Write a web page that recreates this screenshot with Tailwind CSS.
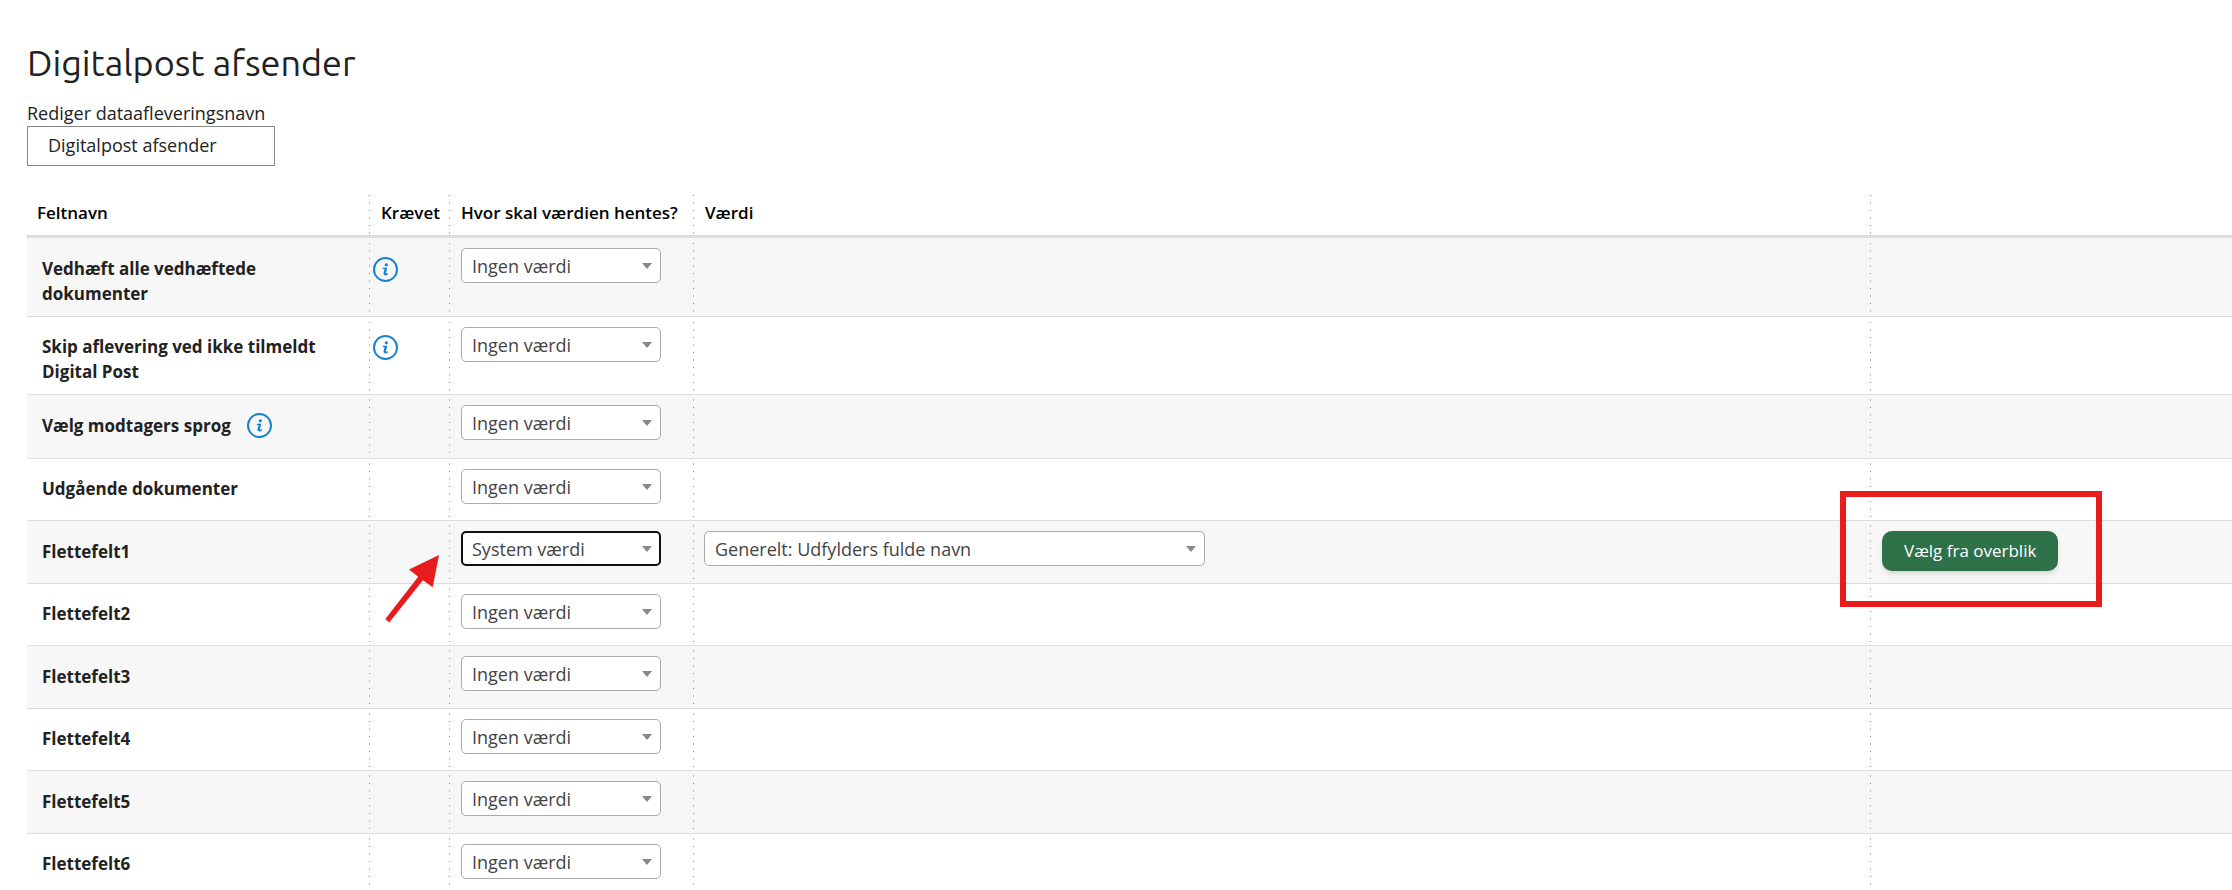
<!DOCTYPE html>
<html lang="da">
<head>
    <meta charset="UTF-8">
    <meta name="viewport" content="width=device-width, initial-scale=1.0">
    <title>Digitalpost afsender</title>
    <script src="https://cdn.jsdelivr.net/npm/@tailwindcss/browser@4"></script>
</head>
<body class="bg-white text-[#222] text-lg/[25px] font-['Open_Sans','Noto_Sans',sans-serif]">
    <main class="pt-10 pl-[27px] overflow-x-hidden">
        <h1 class="text-[36px]/[46px] font-normal font-[Ubuntu,'Noto_Sans',sans-serif]">Digitalpost afsender</h1>

        <!-- Name form -->
        <form class="flex flex-col items-start pt-[15px] pb-6">
            <label for="name">Rediger dataafleveringsnavn</label>
            <input id="name" type="text" value="Digitalpost afsender" class="w-[248px] h-10 px-5 pb-0.5 border border-[#8a8a8a] bg-white">
        </form>

        <!-- Field mapping -->
        <table class="w-full table-fixed border-separate border-spacing-0 text-left text-[17px]/[25px]">
            <colgroup>
                <col class="w-[342px]">
                <col class="w-20">
                <col class="w-[244px]">
                <col>
                <col class="w-[362px]">
            </colgroup>
            <thead>
                <tr id="headRow" class="h-12 text-black"></tr>
            </thead>
            <tbody id="fieldRows"></tbody>
        </table>
    </main>

    <script>
        const fields = [
            { name: 'Vedhæft alle vedhæftede dokumenter', requiredInfo: true, height: 'h-[79px]' },
            { name: 'Skip aflevering ved ikke tilmeldt Digital Post', requiredInfo: true, height: 'h-[78px]' },
            { name: 'Vælg modtagers sprog', info: true, height: 'h-16' },
            { name: 'Udgående dokumenter', height: 'h-[62px]' },
            { name: 'Flettefelt1', source: 'System værdi', value: 'Generelt: Udfylders fulde navn', height: 'h-[63px]' },
            { name: 'Flettefelt2', height: 'h-[62px]' },
            { name: 'Flettefelt3', height: 'h-[63px]' },
            { name: 'Flettefelt4', height: 'h-[62px]' },
            { name: 'Flettefelt5', height: 'h-[63px]' },
            { name: 'Flettefelt6', height: 'h-[62px]' }
        ];

        // Dotted column separator on the left edge of a cell
        const dotsDark = 'bg-no-repeat bg-[length:1px_100%] bg-[repeating-linear-gradient(transparent_0_5px,#888_5px_6px,transparent_6px_12px,#bbb_12px_14px,transparent_14px_15px)]';
        const dotsLight = 'bg-no-repeat bg-[length:1px_100%] bg-[repeating-linear-gradient(transparent_0_4px,#bbb_4px_6px,transparent_6px_12px,#888_12px_13px,transparent_13px_15px)]';

        const infoButton = `
            <button type="button" aria-label="Info" class="block size-[25px]">
                <svg viewBox="0 0 25 25" class="size-[25px]" fill="none" stroke="#1583d0">
                    <circle cx="12.5" cy="12.5" r="11.5" stroke-width="2"/>
                    <circle cx="13.3" cy="7.8" r="1.6" fill="#1583d0" stroke="none"/>
                    <path d="M9.8 11.4h3.4l-1.3 5.2q-.3 1.4.9 1.1t1.8-1.2" stroke-width="1.4"/>
                    <path d="M12.9 11l-1.5 6.4" stroke-width="2.2"/>
                </svg>
            </button>`;

        const arrow = `
            <svg class="absolute left-4 top-[33px] z-10 w-14 h-[70px] pointer-events-none" viewBox="0 0 56 70" fill="#e81c1c">
                <path d="M54 1L47.7 33.3L37.9 26.3L4.3 68.5L0.3 65L33.2 22.8L24 15.5Z"/>
            </svg>`;

        const marker = '<div class="absolute -left-[30px] -top-[30px] z-10 w-[262px] h-[116px] border-6 border-[#e81c1c] pointer-events-none"></div>';

        function dropdown(label, text, width, frame) {
            return `
                <div class="relative ${width}">
                    <select aria-label="${label}" class="block w-full h-[35px] appearance-none rounded-[5px] bg-white text-lg text-[#444] outline-none ${frame}">
                        <option>${text}</option>
                    </select>
                    <svg class="absolute right-[9px] top-[15px] w-2.5 h-1.5 pointer-events-none" viewBox="0 0 10 6" fill="#888"><path d="M0 0H10L5 6Z"/></svg>
                </div>`;
        }

        document.getElementById('headRow').innerHTML = [
            ['Feltnavn', 'pl-2.5'],
            ['Krævet', 'pl-3'],
            ['Hvor skal værdien hentes?', 'pl-3'],
            ['Værdi', 'pl-3'],
            ['', '']
        ].map(([title, pad], i) => `
            <th class="border-b-3 border-[#ddd] font-semibold whitespace-nowrap ${pad} ${i ? dotsDark : ''}">${title}</th>`).join('');

        document.getElementById('fieldRows').innerHTML = fields.map((f, i) => {
            const dots = i < 2 ? dotsDark : dotsLight;
            const cell = `relative border-b border-[#ddd] align-top ${dots}`;
            const frame = f.source ? 'border-2 border-[#111] pl-[9px]' : 'border border-[#aaa] pl-2.5';
            return `
                <tr class="${f.height} ${i % 2 ? 'bg-white' : 'bg-[#f7f7f7]'}">
                    <th class="border-b border-[#ddd] align-top pl-[15px] pr-9 font-bold ${i % 2 ? 'pt-[17px]' : 'pt-[18px]'}">
                        <div class="flex gap-4">${f.name}${f.info ? infoButton : ''}</div>
                    </th>
                    <td class="${cell} pl-1 ${i % 2 ? 'pt-[18px]' : 'pt-[19px]'}">${f.requiredInfo ? infoButton : ''}${f.source ? arrow : ''}</td>
                    <td class="${cell} pt-2.5 pl-3">${dropdown('Kilde for ' + f.name, f.source || 'Ingen værdi', 'w-[200px]', frame)}</td>
                    <td class="${cell} pt-2.5 pl-[11px]">${f.value ? dropdown('Værdi for ' + f.name, f.value, 'max-w-[501px]', 'border border-[#aaa] pl-2.5') : ''}</td>
                    <td class="${cell} pt-2.5 pl-3">${f.value ? `<button type="button" class="block h-10 rounded-[10px] bg-[#2e7148] px-[22px] pb-px text-white shadow-md">Vælg fra overblik</button>${marker}` : ''}</td>
                </tr>`;
        }).join('');
    </script>
</body>
</html>
